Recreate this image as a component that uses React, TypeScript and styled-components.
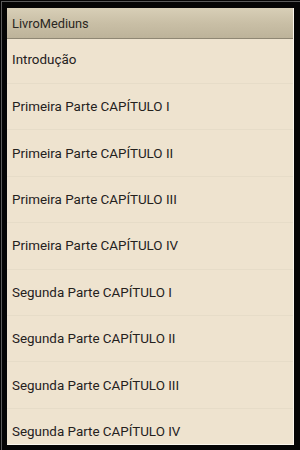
import React from 'react'
import styled, { createGlobalStyle } from 'styled-components'

const GlobalStyle = createGlobalStyle`
  html, body {
    margin: 0;
    padding: 0;
    background: #000;
  }
  body {
    font-family: Roboto, 'Noto Sans', 'Liberation Sans', sans-serif;
  }
`

const Frame = styled.div`
  width: 300px;
  height: 450px;
  box-sizing: border-box;
  background: #050505;
  padding: 1px 0 0 1px;
`

const Bezel = styled.div`
  height: 100%;
  box-sizing: border-box;
  border-top: 1px solid #5a5a5a;
  border-left: 1px solid #5a5a5a;
  padding: 6px 6px 5px 5px;
`

const Screen = styled.div`
  height: 100%;
  box-sizing: border-box;
  background: #eee3cf;
  border-right: 1px solid #faf6ec;
  border-bottom: 1px solid #faf6ec;
  overflow: hidden;
  display: flex;
  flex-direction: column;
`

const TitleBar = styled.div`
  height: 30px;
  flex: none;
  display: flex;
  align-items: center;
  padding-left: 5px;
  background: linear-gradient(#d8cfb7, #c9bfa6 50%, #bdb39a);
  border-bottom: 1px solid #8f8774;
  font-size: 12.8px;
  color: #2a2722;
`

const List = styled.ul`
  list-style: none;
  margin: 0;
  padding: 0;
`

const Row = styled.li<{ first?: boolean }>`
  box-sizing: border-box;
  height: ${({ first }) => (first ? '45px' : '46.4px')};
  display: flex;
  align-items: center;
  padding-left: 5px;
  padding-bottom: ${({ first }) => (first ? '3px' : '0')};
  border-bottom: 1px solid #e6dcc8;
  font-size: 13.4px;
  color: #24211d;
`

const items = [
  'Introdução',
  'Primeira Parte CAPÍTULO I',
  'Primeira Parte CAPÍTULO II',
  'Primeira Parte CAPÍTULO III',
  'Primeira Parte CAPÍTULO IV',
  'Segunda Parte CAPÍTULO I',
  'Segunda Parte CAPÍTULO II',
  'Segunda Parte CAPÍTULO III',
  'Segunda Parte CAPÍTULO IV',
]

const App = () => {
  return (
    <>
      <GlobalStyle />
      <Frame>
        <Bezel>
          <Screen>
            <TitleBar>LivroMediuns</TitleBar>
            <List>
              {items.map((item, i) => (
                <Row key={item} first={i === 0}>
                  {item}
                </Row>
              ))}
            </List>
          </Screen>
        </Bezel>
      </Frame>
    </>
  )
}

export default App
